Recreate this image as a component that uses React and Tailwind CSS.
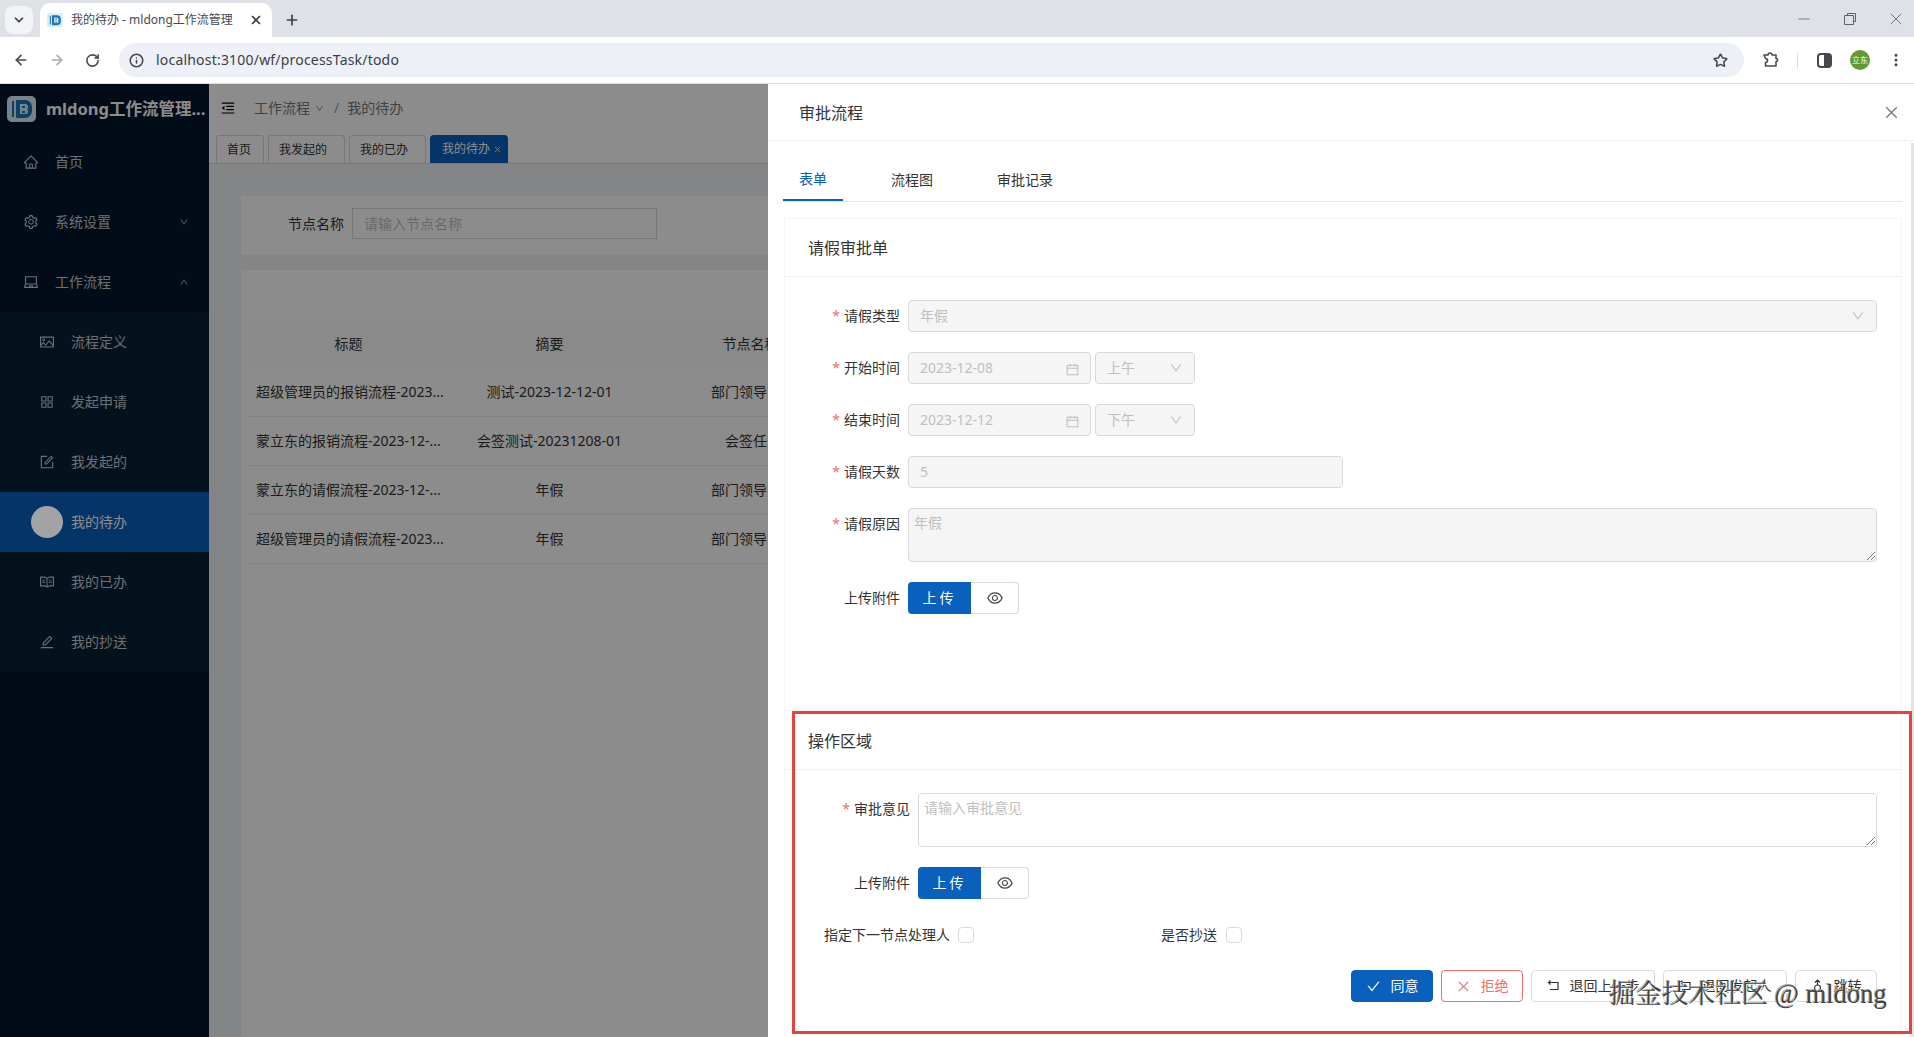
import { X, Plus, ChevronDown, ArrowLeft, ArrowRight, RotateCw, Info, Star, Minus, EllipsisVertical } from 'lucide-react';
import {
  AiOutlineHome, AiOutlineSetting, AiOutlineLaptop, AiOutlinePicture, AiOutlineAppstore, AiOutlineForm,
  AiOutlineRead, AiOutlineEdit, AiOutlineDown, AiOutlineUp, AiOutlineMenuFold, AiOutlineCalendar,
  AiOutlineEye, AiOutlineCheck, AiOutlineClose,
} from 'react-icons/ai';

const menu = [
  { label: '流程定义', Icon: AiOutlinePicture },
  { label: '发起申请', Icon: AiOutlineAppstore },
  { label: '我发起的', Icon: AiOutlineForm },
  { label: '我的待办', active: true },
  { label: '我的已办', Icon: AiOutlineRead },
  { label: '我的抄送', Icon: AiOutlineEdit },
];

const rows = [
  ['超级管理员的报销流程-2023...', '测试-2023-12-12-01', '部门领导审批'],
  ['蒙立东的报销流程-2023-12-...', '会签测试-20231208-01', '会签任务'],
  ['蒙立东的请假流程-2023-12-...', '年假', '部门领导审批'],
  ['超级管理员的请假流程-2023...', '年假', '部门领导审批'],
];

const Logo = ({ size, bg, fg }) => (
  <svg width={size} height={size * 0.9} viewBox="0 0 29 26" className="shrink-0">
    <rect width="29" height="26" rx="5" fill={bg} />
    <path d="M5 5h2v16H5zM9 4h9a7 7 0 0 1 7 7v4a7 7 0 0 1-7 7H9z" fill={fg} />
    <path d="M13 8h5a3 3 0 0 1 3 3v1a2 2 0 0 1-1 1.5 2 2 0 0 1 1 1.5v1a2 2 0 0 1-2 2h-6z" fill={bg} />
    <path d="M15 10h3v2h-3zM15 15h3v2h-3z" fill={fg} />
  </svg>
);

const BrowserBar = () => (
  <div className="h-[84px] shrink-0">
    {/* Tab strip */}
    <div className="h-[37px] bg-[#dee1e6] flex items-end pl-[5px]">
      <div className="mb-[3px] w-[28px] h-[28px] rounded-lg bg-[#f1f3f6] flex items-center justify-center mr-[7px]">
        <ChevronDown size={14} strokeWidth={3} className="text-[#3c4043]" />
      </div>
      <div className="w-[232px] h-[34px] bg-white rounded-t-[10px] flex items-center pl-[7px] pr-[9px]">
        <Logo size={16} bg="#d8eefc" fg="#1a73b8" />
        <span className="ml-[8px] whitespace-nowrap text-xs text-[#45494e]">我的待办 - mldong工作流管理</span>
        <X size={14} strokeWidth={3} className="ml-auto text-[#3c4043]" />
      </div>
      <Plus size={16} strokeWidth={2.5} className="ml-[12px] mb-[9px] text-[#3c4043]" />
      <div className="ml-auto flex items-center h-[37px] text-[#5f6368]">
        <Minus size={18} strokeWidth={1} className="mr-[31px]" />
        <svg width="12" height="12" viewBox="0 0 12 12" fill="none" stroke="currentColor" className="mr-[30px]">
          <path d="M3.5 2.5V.5h8v8h-2M.5 2.5h9v9h-9z" />
        </svg>
        <X size={20} strokeWidth={1} className="mr-[8px]" />
      </div>
    </div>
    {/* Toolbar */}
    <div className="h-[47px] bg-white border-b border-[#dadce0] flex items-center text-[#45494e]">
      <ArrowLeft size={16} strokeWidth={2.5} className="ml-[13px]" />
      <ArrowRight size={16} strokeWidth={2.5} className="ml-[20px] text-[#a9acb0]" />
      <RotateCw size={15} strokeWidth={2.5} className="ml-[20px]" />
      <div className="ml-[19px] w-[1625px] h-[34px] rounded-full bg-[#edf0f7] flex items-center pl-[10px] pr-[16px]">
        <Info size={15} strokeWidth={2.5} />
        <span className="ml-[12px] text-sm tracking-[0.2px] text-[#3c4043]">localhost:3100/wf/processTask/todo</span>
        <Star size={15} strokeWidth={2.5} className="ml-auto" />
      </div>
      <svg width="16" height="16" viewBox="0 0 16 16" fill="none" stroke="currentColor" strokeWidth="1.6" strokeLinejoin="round" className="ml-[19px]">
        <path d="M1 3h4a2 2 0 0 1 4 0h4v3.500a1.600 1.600 0 0 1 0 3.200V14H2.500V10.500a2 2 0 0 0 0-4z" />
      </svg>
      <div className="ml-[18px] w-px h-[15px] bg-[#dadce0]" />
      <div className="ml-[19px] w-[15px] h-[15px] border-2 border-[#45494e] rounded-sm bg-gradient-to-r from-white from-50% to-[#45494e] to-50%" />
      <div className="ml-[18px] w-[20px] h-[20px] rounded-full bg-[#5e9c2f] text-white text-[8px] flex items-center justify-center">立东</div>
      <EllipsisVertical size={16} strokeWidth={2.5} className="ml-[18px]" />
    </div>
  </div>
);

const Sidebar = () => (
  <aside className="w-[209px] shrink-0 bg-[#02162c] text-[#c6ccd3] text-sm">
    <div className="h-[50px] flex items-center pl-[7px]">
      <Logo size={29} bg="#d8eefc" fg="#1a73b8" />
      <span className="ml-[10px] text-[16.5px] font-bold text-white whitespace-nowrap">mldong工作流管理...</span>
    </div>
    {[
      { label: '首页', Icon: AiOutlineHome },
      { label: '系统设置', Icon: AiOutlineSetting, arrow: AiOutlineDown },
      { label: '工作流程', Icon: AiOutlineLaptop, arrow: AiOutlineUp },
    ].map(({ label, Icon, arrow: Arrow }, i) => (
      <div key={label} className={`h-[60px] flex items-center pl-[23px] pr-[20px] ${i === 0 ? 'mt-[-2px]' : ''}`}>
        <Icon size={16} className="shrink-0" />
        <span className="ml-[16px]">{label}</span>
        {Arrow && <Arrow size={10} className="ml-auto" />}
      </div>
    ))}
    <div className="bg-[#082138]">
      {menu.map(({ label, Icon, active }) => (
        <div key={label} className={`h-[60px] flex items-center pl-[39px] ${active ? 'bg-[#0960bd] text-white relative' : ''}`}>
          {active
            ? <div className="absolute z-10 left-[31px] top-[14px] w-[32px] h-[32px] rounded-full bg-[#a3a3a3]" />
            : <Icon size={16} className="shrink-0" />}
          <span className={active ? 'ml-[32px]' : 'ml-[16px]'}>{label}</span>
        </div>
      ))}
    </div>
  </aside>
);

const PageBehind = () => (
  <main className="flex-1 min-w-0 bg-[#f0f2f5] overflow-hidden text-sm text-[#333]">
    <div className="h-[50px] pb-[2px] bg-white flex items-center pl-[11px] text-[#777]">
      <AiOutlineMenuFold size={16} className="text-black" />
      <span className="ml-[18px]">工作流程</span>
      <AiOutlineDown size={9} className="ml-[5px]" />
      <span className="ml-[10px] text-[#999]">/</span>
      <span className="ml-[8px]">我的待办</span>
    </div>
    <div className="h-[30px] bg-white border-b border-[#d9d9d9] flex items-end pl-[7px] gap-[4px] text-xs">
      {['首页', '我发起的', '我的已办'].map((t) => (
        <div key={t} className={`h-[28px] pl-[10px] border border-b-0 border-[#d9d9d9] flex items-center rounded-t-sm text-[#333] ${t === '首页' ? 'w-[48px]' : 'w-[77px]'}`}>{t}</div>
      ))}
      <div className="h-[28px] w-[78px] pl-[12px] bg-[#0960bd] text-white rounded-t-sm flex items-center gap-[3px]">
        我的待办<X size={9} />
      </div>
    </div>
    <div className="pt-[32px] pl-[32px]">
      <div className="h-[59px] w-[600px] bg-white flex pt-[12px] pl-[47px]">
        <span className="w-[56px] h-[31px] leading-[31px] whitespace-nowrap">节点名称</span>
        <div className="ml-[8px] w-[305px] h-[31px] border border-[#d9d9d9] flex items-center pl-[11px] text-[#bfbfbf]">请输入节点名称</div>
      </div>
      <div className="mt-[15px] w-[600px] h-[900px] bg-white pl-[7px] pt-[50px]">
        <div className="h-[48px] bg-[#fbfbfb] flex items-center">
          {['标题', '摘要', '节点名称'].map((h) => (
            <div key={h} className="w-[201px] shrink-0 text-center">{h}</div>
          ))}
        </div>
        {rows.map((r) => (
          <div key={r[0]} className="h-[49px] border-b border-[#f0f0f0] flex items-center">
            <div className="w-[201px] shrink-0 pl-[8px] whitespace-nowrap overflow-hidden">{r[0]}</div>
            <div className="w-[201px] shrink-0 text-center whitespace-nowrap">{r[1]}</div>
            <div className="w-[206px] shrink-0 text-center whitespace-nowrap">{r[2]}</div>
          </div>
        ))}
      </div>
    </div>
  </main>
);

const Field = ({ label, required, labelWidth = 'w-[123px]', children, className = 'h-[32px]' }) => (
  <div className="flex mb-[20px]">
    <div className={`${labelWidth} shrink-0 pr-[8px] h-[32px] flex items-center justify-end text-[#333] whitespace-nowrap`}>
      {required && <span className="text-[#ed6f6f] mr-[4px]">*</span>}
      {label}
    </div>
    <div className={className}>{children}</div>
  </div>
);

const disabledBox = 'h-[32px] bg-[#f5f5f5] border border-[#d9d9d9] text-[#bfbfbf] flex items-center rounded-sm';

const Upload = () => (
  <div className="flex h-[32px]">
    <button className="w-[63px] bg-[#0960bd] text-white tracking-[3px] rounded-l-sm">上传</button>
    <div className="w-[48px] border border-l-0 border-[#d9d9d9] rounded-r-sm flex items-center justify-center text-[#444]">
      <AiOutlineEye size={18} />
    </div>
  </div>
);

const DateGroup = ({ date, half }) => (
  <div className="flex gap-[4px]">
    <div className={`${disabledBox} w-[183px] pl-[11px] pr-[10px] justify-between`}>
      {date}<AiOutlineCalendar size={15} className="mt-[3px]" />
    </div>
    <div className={`${disabledBox} w-[100px] pl-[11px] pr-[11px] justify-between`}>
      {half}<AiOutlineDown size={14} />
    </div>
  </div>
);

const ActionButton = ({ icon, children, className }) => (
  <button className={`h-[32px] flex items-center justify-center gap-[10px] rounded-sm border ${className}`}>
    {icon}{children}
  </button>
);

const BackIcon = () => (
  <svg width="13" height="12" viewBox="0 0 13 12" fill="none" stroke="currentColor" strokeWidth="1.2">
    <path d="M1 2.500h10v7H3M3.500.5l-2 2 2 2" />
  </svg>
);

const JumpIcon = () => (
  <svg width="13" height="14" viewBox="0 0 13 14" fill="none" stroke="currentColor" strokeWidth="1.2">
    <circle cx="6.500" cy="9" r="3" />
    <path d="M6.500 6V1M4 3.500l2.500-2.500L9 3.500" />
  </svg>
);

const ResizeGrip = () => (
  <svg className="absolute right-[1px] bottom-[1px]" width="9" height="9" viewBox="0 0 9 9" stroke="#777" fill="none">
    <path d="M1 9L9 1M5 9L9 5" />
  </svg>
);

const Drawer = () => (
  <section className="absolute top-0 bottom-0 right-0 w-[1146px] bg-white text-sm text-[#333] overflow-hidden">
    <div className="h-[57px] pt-[1px] border-b border-[#f0f0f0] flex items-center pl-[31px] pr-[14px] text-base">
      审批流程
      <AiOutlineClose size={17} className="ml-auto text-[#777]" />
    </div>
    <div className="absolute right-0 top-[59px] w-[3px] h-[900px] bg-[#e3e3e3]" />
    <div className="ml-[15px] mr-[12px] h-[61px] border-b border-[#e8e8e8] flex items-end">
      <div className="w-[60px] h-[41px] pb-[2px] border-b-2 border-[#0960bd] text-[#0960bd] flex items-center justify-center">表单</div>
      <div className="ml-[48px] h-[41px] pb-[2px] flex items-center">流程图</div>
      <div className="ml-[64px] h-[41px] pb-[2px] flex items-center">审批记录</div>
    </div>
    {/* Form card */}
    <div className="ml-[16px] mr-[12px] mt-[16px] h-[492px] border border-b-0 border-[#f5f5f5]">
      <div className="h-[58px] pt-[1px] border-b border-[#f0f0f0] flex items-center pl-[23px] text-base">请假审批单</div>
      <div className="pt-[23px] pr-[24px]">
        <Field label="请假类型" required className="flex-1">
          <div className={`${disabledBox} px-[11px] justify-between`}>年假<AiOutlineDown size={14} /></div>
        </Field>
        <Field label="开始时间" required><DateGroup date="2023-12-08" half="上午" /></Field>
        <Field label="结束时间" required><DateGroup date="2023-12-12" half="下午" /></Field>
        <Field label="请假天数" required>
          <div className={`${disabledBox} w-[435px] px-[11px]`}>5</div>
        </Field>
        <Field label="请假原因" required className="flex-1">
          <div className="relative h-[54px] bg-[#f5f5f5] border border-[#d9d9d9] rounded-sm text-[#bfbfbf] pl-[5px] pt-[4px]">
            年假
            <ResizeGrip />
          </div>
        </Field>
        <Field label="上传附件"><Upload /></Field>
      </div>
    </div>
    {/* Action card */}
    <div className="ml-[16px] mr-[12px] h-[327px] border border-b-0 border-[#f5f5f5]">
      <div className="h-[59px] pt-[1px] border-b border-[#f0f0f0] flex items-center pl-[23px] text-base">操作区域</div>
      <div className="pt-[23px] pr-[24px]">
        <Field label="审批意见" required labelWidth="w-[133px]" className="flex-1">
          <div className="relative h-[54px] border border-[#d9d9d9] rounded-sm text-[#bfbfbf] pl-[5px] pt-[4px]">
            请输入审批意见
            <ResizeGrip />
          </div>
        </Field>
        <Field label="上传附件" labelWidth="w-[133px]"><Upload /></Field>
        <div className="h-[32px] mb-[19px] flex items-center">
          <span className="ml-[39px] w-[134px] whitespace-nowrap">指定下一节点处理人</span>
          <span className="w-[16px] h-[16px] border border-[#d9d9d9] rounded-sm" />
          <span className="ml-[187px] w-[65px] whitespace-nowrap">是否抄送</span>
          <span className="w-[16px] h-[16px] border border-[#d9d9d9] rounded-sm" />
        </div>
        <div className="flex justify-end gap-[8px]">
          <ActionButton icon={<AiOutlineCheck size={15} />} className="w-[82px] bg-[#0960bd] border-[#0960bd] text-white">同意</ActionButton>
          <ActionButton icon={<AiOutlineClose size={15} />} className="w-[82px] border-[#ed6f6f] text-[#ed6f6f]">拒绝</ActionButton>
          <ActionButton icon={<BackIcon />} className="w-[124px] border-[#d9d9d9]">退回上一步</ActionButton>
          <ActionButton icon={<BackIcon />} className="w-[124px] border-[#d9d9d9]">退回发起人</ActionButton>
          <ActionButton icon={<JumpIcon />} className="w-[82px] border-[#d9d9d9]">跳转</ActionButton>
        </div>
      </div>
    </div>
    {/* Red annotation and watermark drawn over the screenshot */}
    <div className="absolute left-[24px] right-[2px] top-[627px] h-[323px] border-[3px] border-[#e8413f]" />
    <div className="absolute left-[841px] top-[893px] whitespace-nowrap text-[26.5px] leading-[34px] text-[#444] [font-family:'Liberation_Serif','Noto_Serif_CJK_SC','Noto_Sans_CJK_SC',serif] [text-shadow:1px_1px_0_#fff,-1px_-1px_0_#aaa]">掘金技术社区 @ mldong</div>
  </section>
);

export default function App() {
  return (
    <div className="w-[1914px] h-[1037px] overflow-hidden flex flex-col bg-white [font-family:'Noto_Sans','Noto_Sans_CJK_SC',sans-serif]">
      <BrowserBar />
      <div className="relative flex flex-1 min-h-0">
        <Sidebar />
        <PageBehind />
        <div className="absolute inset-0 bg-black/45" />
        <Drawer />
      </div>
    </div>
  );
}
